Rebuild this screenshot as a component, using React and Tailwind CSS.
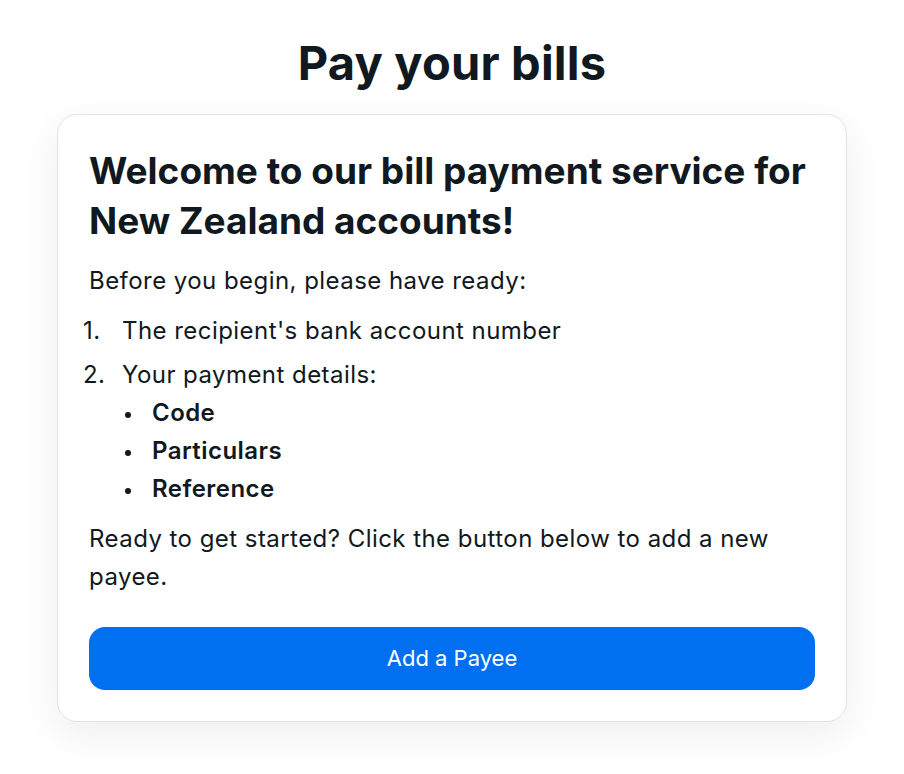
import React from 'react'

const details = ["Code", "Particulars", "Reference"];

function App() {
    return (
        <div className="min-h-screen bg-white font-['Inter',sans-serif] text-[#101820]">
            <h1 className="text-center text-[47px] leading-[56px] tracking-[0.2px] font-bold pt-[35px]">Pay your bills</h1>
            <div className="mx-[57px] mt-[23px] rounded-[20px] border border-[#e2e2e2] bg-white shadow-[0_12px_40px_rgba(0,0,0,0.07)] px-[31px] pt-[31px] pb-[31px]">
                <h2 className="text-[37px] leading-[50px] font-bold">Welcome to our bill payment service for New Zealand accounts!</h2>
                <div className="text-[24px] leading-[38px] tracking-[0.45px]">
                    <p className="mt-[16px]">Before you begin, please have ready:</p>
                    <ol className="mt-[12px]">
                        <li className="flex -ml-[6px]">
                            <span className="w-[39px] shrink-0">1.</span>
                            <span>The recipient's bank account number</span>
                        </li>
                        <li className="flex -ml-[6px] mt-[6px]">
                            <span className="w-[39px] shrink-0">2.</span>
                            <div>
                                Your payment details:
                                <ul className="font-semibold">
                                    {details.map((d) => (
                                        <li key={d} className="flex items-center">
                                            <span className="w-[6px] h-[6px] rounded-full bg-[#101820] ml-[3px] mr-[21px] mt-[3px] shrink-0"></span>
                                            {d}
                                        </li>
                                    ))}
                                </ul>
                            </div>
                        </li>
                    </ol>
                    <p className="mt-[12px]">Ready to get started? Click the button below to add a new payee.</p>
                </div>
                <button type="button" className="w-full mt-[31px] h-[63px] rounded-[16px] bg-[#0070f0] text-white text-[22px]">Add a Payee</button>
            </div>
        </div>
    )
}

export default App
